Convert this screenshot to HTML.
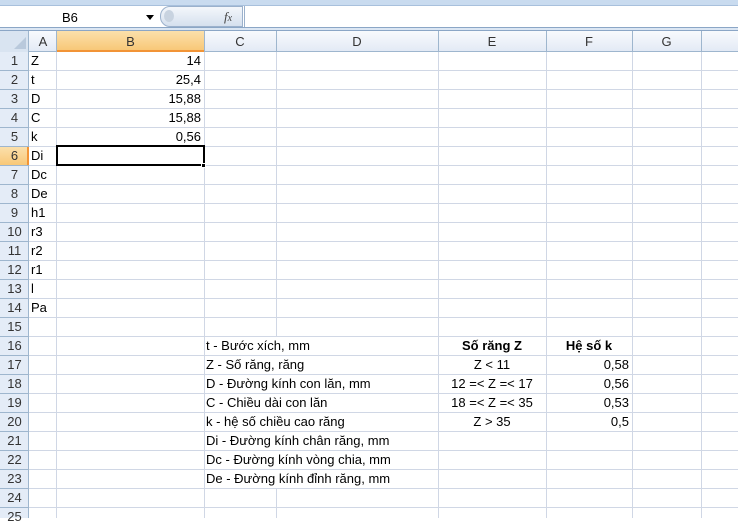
<!DOCTYPE html>
<html><head><meta charset="utf-8"><style>
*{margin:0;padding:0;box-sizing:border-box}
body{width:738px;height:518px;overflow:hidden;background:#fff;font-family:"Liberation Sans",Arial,sans-serif;font-size:13px;color:#000;position:relative}
.a{position:absolute}
.t{position:absolute;height:19px;line-height:20px;white-space:nowrap}
</style></head><body>
<div class="a" style="left:0;top:0;width:738px;height:6px;background:#c9dbef;border-bottom:1px solid #a8c0dc"></div>
<div class="a" style="left:0;top:6px;width:738px;height:22px;background:#fff"></div>
<div class="a" style="left:0;top:27px;width:738px;height:4px;background:#dbe6f3;border-top:1px solid #8ba6c6;border-bottom:1px solid #8ba6c6"></div>
<div class="t" style="left:62px;top:8px">B6</div>
<div class="a" style="left:146px;top:15px;border-left:4px solid transparent;border-right:4px solid transparent;border-top:5px solid #000"></div>
<div class="a" style="left:160px;top:6px;width:83px;height:21px;background:linear-gradient(#f4f7fb,#d5e0ee);border:1px solid #9bb1cc;border-radius:10px 0 0 10px"></div>
<div class="a" style="left:164px;top:10px;width:10px;height:12px;border-radius:50%;background:#c8d3e0"></div>
<div class="t" style="left:224px;top:7px;font-family:'Liberation Serif',serif;font-style:italic;color:#444">f<span style="font-size:10px">x</span></div>
<div class="a" style="left:244px;top:6px;width:494px;height:21px;border-left:1px solid #9bb1cc"></div>
<div class="a" style="left:0;top:31px;width:738px;height:21px;background:linear-gradient(#f8fafd,#e3eaf5);border-bottom:1px solid #9eb6ce"></div>
<div class="a" style="left:0;top:31px;width:29px;height:21px;background:#d9e4f1;border-right:1px solid #9eb6ce"></div>
<div class="a" style="left:14px;top:37px;border-left:12px solid transparent;border-bottom:12px solid #b9c9dc"></div>
<div class="a" style="left:57px;top:31px;width:147px;height:21px;background:linear-gradient(#fbe0ab,#f8c878);border-bottom:2px solid #f29436"></div>
<div class="a" style="left:56px;top:31px;width:1px;height:21px;background:#9eb6ce"></div>
<div class="a" style="left:204px;top:31px;width:1px;height:21px;background:#9eb6ce"></div>
<div class="a" style="left:276px;top:31px;width:1px;height:21px;background:#9eb6ce"></div>
<div class="a" style="left:438px;top:31px;width:1px;height:21px;background:#9eb6ce"></div>
<div class="a" style="left:546px;top:31px;width:1px;height:21px;background:#9eb6ce"></div>
<div class="a" style="left:632px;top:31px;width:1px;height:21px;background:#9eb6ce"></div>
<div class="a" style="left:701px;top:31px;width:1px;height:21px;background:#9eb6ce"></div>
<div class="t" style="left:29px;width:28px;top:32px;text-align:center;color:#333">A</div>
<div class="t" style="left:57px;width:147px;top:32px;text-align:center;color:#333">B</div>
<div class="t" style="left:204px;width:72px;top:32px;text-align:center;color:#333">C</div>
<div class="t" style="left:276px;width:162px;top:32px;text-align:center;color:#333">D</div>
<div class="t" style="left:438px;width:108px;top:32px;text-align:center;color:#333">E</div>
<div class="t" style="left:546px;width:86px;top:32px;text-align:center;color:#333">F</div>
<div class="t" style="left:632px;width:69px;top:32px;text-align:center;color:#333">G</div>
<div class="a" style="left:0;top:52px;width:738px;height:466px;background:repeating-linear-gradient(to bottom,transparent 0,transparent 18px,#d0d7e5 18px,#d0d7e5 19px)"></div>
<div class="a" style="left:0;top:52px;width:29px;height:466px;background:repeating-linear-gradient(to bottom,#e4ecf7 0,#e4ecf7 18px,#9eb6ce 18px,#9eb6ce 19px);border-right:1px solid #9eb6ce"></div>
<div class="a" style="left:0;top:147px;width:29px;height:18px;background:linear-gradient(#fbe0ab,#f8c878);border-right:2px solid #f29436"></div>
<div class="a" style="left:56px;top:52px;width:1px;height:466px;background:#d0d7e5"></div>
<div class="a" style="left:204px;top:52px;width:1px;height:466px;background:#d0d7e5"></div>
<div class="a" style="left:276px;top:52px;width:1px;height:466px;background:#d0d7e5"></div>
<div class="a" style="left:438px;top:52px;width:1px;height:466px;background:#d0d7e5"></div>
<div class="a" style="left:546px;top:52px;width:1px;height:466px;background:#d0d7e5"></div>
<div class="a" style="left:632px;top:52px;width:1px;height:466px;background:#d0d7e5"></div>
<div class="a" style="left:701px;top:52px;width:1px;height:466px;background:#d0d7e5"></div>
<div id="rows"></div>
<div class="a" style="left:56px;top:145px;width:149px;height:21px;border:2px solid #000"></div>
<div class="a" style="left:201px;top:163px;width:5px;height:5px;background:#000;border:1px solid #fff"></div>
<script>
var R=document.getElementById('rows'),h='';
function t(x,r,s,st){h+='<div class="t" style="left:'+x+'px;top:'+(51+19*(r-1))+'px;'+(st||'')+'">'+s+'</div>';}
for(var r=16;r<=23;r++)h+='<div class="a" style="left:276px;top:'+(52+19*(r-1))+'px;width:1px;height:18px;background:#fff"></div>';
for(var i=1;i<=25;i++)t(0,i,i,'width:29px;text-align:center;color:#333');
['Z','t','D','C','k','Di','Dc','De','h1','r3','r2','r1','l','Pa'].forEach(function(s,i){t(31,i+1,s);});
['14','25,4','15,88','15,88','0,56'].forEach(function(s,i){t(57,i+1,s,'width:144px;text-align:right');});
['t - Bước xích, mm','Z - Số răng, răng','D - Đường kính con lăn, mm','C - Chiều dài con lăn','k - hệ số chiều cao răng','Di - Đường kính chân răng, mm','Dc - Đường kính vòng chia, mm','De - Đường kính đỉnh răng, mm'].forEach(function(s,i){t(206,i+16,s);});
t(438,16,'Số răng Z','width:108px;text-align:center;font-weight:bold');
t(546,16,'Hệ số k','width:86px;text-align:center;font-weight:bold');
['Z &lt; 11','12 =&lt; Z =&lt; 17','18 =&lt; Z =&lt; 35','Z &gt; 35'].forEach(function(s,i){t(438,i+17,s,'width:108px;text-align:center');});
['0,58','0,56','0,53','0,5'].forEach(function(s,i){t(546,i+17,s,'width:83px;text-align:right');});
R.innerHTML=h;
</script>
</body></html>
